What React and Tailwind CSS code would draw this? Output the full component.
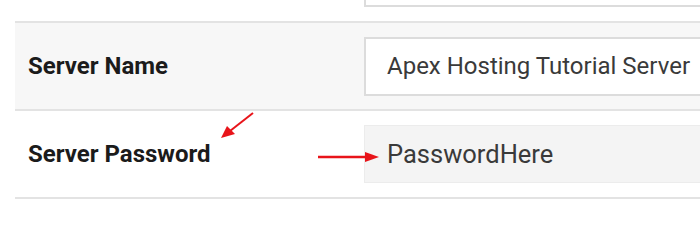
export default function App() {
  return (
    <div className="relative w-[700px] h-[250px] overflow-hidden bg-white font-['Roboto',sans-serif]">
      <div className="ml-[15px] w-[800px]">
        {/* previous row, only its input bottom shows */}
        <div className="h-[21px]">
          <div className="ml-[349px] h-[7px] border-x-2 border-b-2 border-[#dcdcdc]" />
        </div>

        <div className="flex items-center h-[88px] border-t-2 border-[#e3e3e3] bg-[#f7f7f7]">
          <div className="w-[349px] pl-[13px] text-[24px] font-bold text-[#1b1b1b]">Server Name</div>
          <div className="flex items-center h-[59px] w-[420px] border-2 border-[#dcdcdc] bg-white pl-[21px] text-[24px] text-[#3a3a3a]">
            Apex Hosting Tutorial Server
          </div>
        </div>

        <div className="flex items-center h-[90px] border-y-2 border-[#e3e3e3]">
          <div className="w-[349px] pl-[13px] text-[24px] font-bold text-[#1b1b1b]">Server Password</div>
          <div className="flex items-center h-[58px] w-[420px] border border-[#ececec] bg-[#f4f4f4] pl-[22px] text-[25.5px] text-[#3a3a3a]">
            PasswordHere
          </div>
        </div>
      </div>

      <svg className="absolute left-0 top-0" width="700" height="250">
        <line x1="253" y1="113" x2="230" y2="131" stroke="#e8141a" strokeWidth="2" />
        <polygon points="221,138 227,126 235,134" fill="#e8141a" />
        <line x1="318" y1="157" x2="366" y2="157" stroke="#e8141a" strokeWidth="2.5" />
        <polygon points="379,157 365,152 365,162" fill="#e8141a" />
      </svg>
    </div>
  )
}
